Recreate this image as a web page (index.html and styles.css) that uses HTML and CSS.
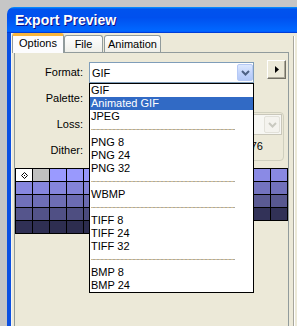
FILE: index.html
```html
<!DOCTYPE html>
<html lang="en">
  <head>
    <meta charset="UTF-8" />
    <title>Export Preview</title>
    <link rel="stylesheet" href="styles.css">
  </head>
  <body>
    <div class="screen">
      <div class="window">
        <div class="titlebar"><span class="title">Export Preview</span></div>
        <div class="frame">
          <div class="main">
            <div class="tabs">
              <div class="tab active">Options</div>
              <div class="tab file">File</div>
              <div class="tab anim">Animation</div>
            </div>
            <div class="panel">
              <div class="row">
                <span class="label">Format:</span>
                <div class="select">
                  <span class="value">GIF</span>
                  <span class="drop">
                    <svg width="9" height="6" viewBox="0 0 9 6"><path d="M1 1 L4.5 4.5 L8 1" fill="none" stroke="#4d6185" stroke-width="2"/></svg>
                  </span>
                  <ul class="list">
                    <li>GIF</li>
                    <li class="selected">Animated GIF</li>
                    <li>JPEG</li>
                    <li class="sep"></li>
                    <li>PNG 8</li>
                    <li>PNG 24</li>
                    <li>PNG 32</li>
                    <li class="sep"></li>
                    <li>WBMP</li>
                    <li class="sep"></li>
                    <li>TIFF 8</li>
                    <li>TIFF 24</li>
                    <li>TIFF 32</li>
                    <li class="sep"></li>
                    <li>BMP 8</li>
                    <li>BMP 24</li>
                  </ul>
                </div>
                <button class="more">
                  <svg width="4" height="7" viewBox="0 0 4 7"><path d="M0 0 L4 3.5 L0 7 Z" fill="#000"/></svg>
                </button>
              </div>
              <div class="row">
                <span class="label">Palette:</span>
                <div class="select"></div>
              </div>
              <div class="lower">
                <div class="labels">
                  <span class="label">Loss:</span>
                  <span class="label">Dither:</span>
                </div>
                <div class="group">
                  <div class="loss-field">
                    <span class="drop disabled">
                      <svg width="9" height="6" viewBox="0 0 9 6"><path d="M1 1 L4.5 4.5 L8 1" fill="none" stroke="#c9c9c0" stroke-width="2"/></svg>
                    </span>
                  </div>
                  <div class="dither"><span class="amount">76</span></div>
                </div>
              </div>
              <div class="swatches" id="swatches"></div>
            </div>
          </div>
          <div class="side"></div>
        </div>
      </div>
    </div>

    <script>
      // palette sorted light to dark, 16 per row
      const stops = [
        [154, 154, 255],
        [134, 134, 222],
        [112, 112, 186],
        [88, 88, 144],
        [50, 50, 88],
        [36, 36, 62],
      ];
      const total = 78;
      const swatches = document.getElementById("swatches");

      function colorAt(t) {
        const pos = t * (stops.length - 1);
        const i = Math.min(Math.floor(pos), stops.length - 2);
        const f = pos - i;
        const c = stops[i].map((v, k) => Math.round(v + (stops[i + 1][k] - v) * f));
        return `rgb(${c[0]}, ${c[1]}, ${c[2]})`;
      }

      for (let i = 0; i < total; i++) {
        const cell = document.createElement("div");
        cell.classList.add("swatch");
        if (i === 0) {
          cell.classList.add("transparent");
          cell.innerHTML =
            '<svg width="7" height="7" viewBox="0 0 7 7"><path d="M3.5 0.5 L6.5 3.5 L3.5 6.5 L0.5 3.5 Z" fill="none" stroke="#000" stroke-width="1"/><rect x="3" y="3" width="1" height="1" fill="#000"/></svg>';
        } else if (i === 1) {
          cell.style.background = "#c0c0c0";
        } else {
          cell.style.background = colorAt((i - 2) / (total - 3));
        }
        swatches.appendChild(cell);
      }
    </script>
  </body>
</html>
```

FILE: styles.css
```css
body {
  margin: 0;
  overflow: hidden;
  background: #c6c6c6;
  font-family: "Liberation Sans", Arial, sans-serif;
  font-size: 11px;
  color: #000;
}
.screen {
  padding: 7px 0 0 7px;
  height: 326px;
  box-sizing: border-box;
}
.window {
  width: 300px;
  height: 319px;
  border-radius: 7px 7px 0 0;
  overflow: hidden;
  display: flex;
  flex-direction: column;
}
.titlebar {
  height: 26px;
  flex-shrink: 0;
  display: flex;
  align-items: center;
  padding-left: 8px;
  background: linear-gradient(
    180deg,
    #0997ff,
    #0053ee 8%,
    #0050ee 40%,
    #0066ff 88%,
    #0066ff 93%,
    #005bff 95%,
    #003dd7 96%,
    #003dd7
  );
}
.title {
  color: #fff;
  font-weight: bold;
  font-size: 14px;
  text-shadow: 1px 1px 0 #0f1089;
}
.frame {
  flex: 1;
  display: flex;
  border-left: 4px solid #0c50e2;
  background: #ece9d8;
}
.main {
  width: 278px;
  box-sizing: border-box;
  border-left: 1px solid #f6f5ee;
  display: flex;
  flex-direction: column;
}
.tabs {
  display: flex;
  align-items: flex-end;
  height: 19px;
  position: relative;
  z-index: 1;
}
.tab {
  height: 17px;
  box-sizing: border-box;
  border: 1px solid #919b9c;
  border-bottom: none;
  border-radius: 3px 3px 0 0;
  background: linear-gradient(#fff, #fafaf9 26%, #f0f0ea 95%, #ecebe5);
  text-align: center;
  line-height: 16px;
}
.tab.active {
  width: 52px;
  height: 20px;
  margin-bottom: -1px;
  border-top: 3px solid #f7b53c;
  background: #fcfcfe;
  line-height: 15px;
}
.tab.file {
  width: 39px;
}
.tab.anim {
  width: 57px;
  margin-left: 1px;
}
.panel {
  flex: 1;
  margin-left: 2px;
  width: 275px;
  box-sizing: border-box;
  border: 1px solid #919b9c;
  border-bottom: none;
  padding-top: 9px;
}
.row {
  display: flex;
  align-items: center;
  height: 21px;
  margin-bottom: 5px;
}
.label {
  width: 68px;
  margin-right: 6px;
  text-align: right;
  line-height: 21px;
}
.select {
  position: relative;
  width: 165px;
  height: 21px;
  box-sizing: border-box;
  border: 1px solid #7f9db9;
  background: #fff;
  display: flex;
  align-items: center;
}
.value {
  padding-left: 2px;
}
.drop {
  margin-left: auto;
  width: 16px;
  height: 17px;
  box-sizing: border-box;
  border: 1px solid #b5c9f6;
  border-radius: 2px;
  background: linear-gradient(#dce8fe, #c0d2fb 60%, #b3c8f7);
  display: flex;
  align-items: center;
  justify-content: center;
}
.drop.disabled {
  border-color: #e2e1d9;
  background: #f4f3ee;
}
.list {
  position: absolute;
  top: calc(100% + 1px);
  left: -1px;
  width: 165px;
  box-sizing: border-box;
  margin: 0;
  padding: 0;
  list-style: none;
  border: 1px solid #000;
  background: #fff;
  z-index: 5;
}
.list li {
  height: 13px;
  line-height: 13px;
  padding-left: 1px;
  white-space: nowrap;
}
.list li.selected {
  background: #316ac5;
  color: #fff;
}
.list li.sep::after {
  content: "";
  display: block;
  width: 144px;
  height: 1px;
  position: relative;
  top: 6px;
  background: repeating-linear-gradient(90deg, #d2bc90 0 2px, #a9a9a4 2px 4px);
}
.more {
  align-self: flex-start;
  margin: -2px 0 0 13px;
  width: 19px;
  height: 19px;
  padding: 0;
  box-sizing: border-box;
  border: 1px solid;
  border-color: #fff #716f64 #716f64 #fff;
  box-shadow: inset -1px -1px 0 #aca899;
  background: #ece9d8;
  display: flex;
  align-items: center;
  justify-content: center;
}
.lower {
  display: flex;
}
.labels {
  display: flex;
  flex-direction: column;
  gap: 5px;
}
.group {
  margin: -2px 0 0 0;
  width: 195px;
  height: 49px;
  box-sizing: border-box;
  border: 1px solid #d0d0bf;
  border-radius: 4px;
  padding: 1px;
}
.loss-field {
  margin-left: 60px;
  height: 21px;
  box-sizing: border-box;
  border: 1px solid #c9c7ba;
  background: #f7f7f3;
  display: flex;
  align-items: center;
  padding-right: 1px;
}
.dither {
  display: flex;
  justify-content: flex-end;
  align-items: center;
  height: 22px;
  padding-right: 19px;
}
.swatches {
  margin-top: 7px;
  width: 273px;
  box-sizing: border-box;
  display: grid;
  grid-template-columns: repeat(16, 17px);
  border-top: 1px solid #000;
  border-left: 1px solid #000;
}
.swatch {
  height: 13px;
  box-sizing: border-box;
  border-right: 1px solid #000;
  border-bottom: 1px solid #000;
}
.swatch.transparent {
  background: #fff;
  display: flex;
  align-items: center;
  justify-content: center;
}
.side {
  margin: 3px 0 0 4px;
  flex: 1;
  border-left: 1px solid #a7a69c;
  box-shadow: inset 1px 0 0 #fff;
}
```
